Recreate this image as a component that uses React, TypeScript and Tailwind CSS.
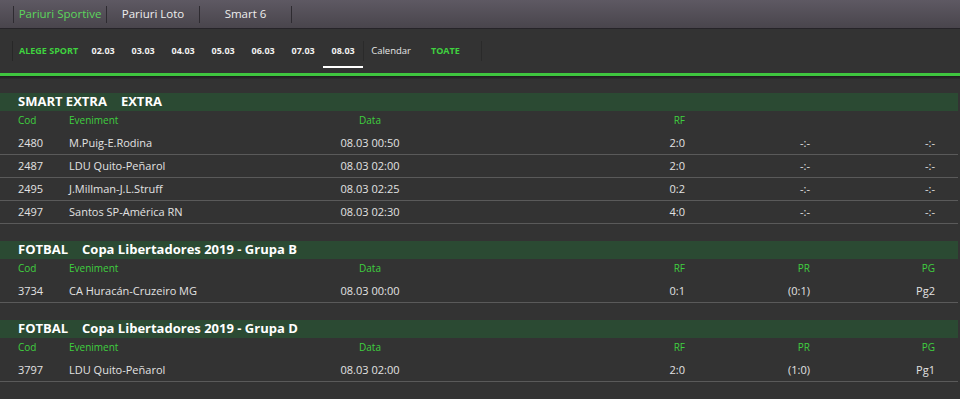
import React from "react";

type Row = { cod: string; ev: string; data: string; rf: string; pr: string; pg: string };
type Section = { sport: string; league: string; showPrPg: boolean; rows: Row[] };

const sections: Section[] = [
  {
    sport: "SMART EXTRA",
    league: "EXTRA",
    showPrPg: false,
    rows: [
      { cod: "2480", ev: "M.Puig-E.Rodina", data: "08.03 00:50", rf: "2:0", pr: "-:-", pg: "-:-" },
      { cod: "2487", ev: "LDU Quito-Peñarol", data: "08.03 02:00", rf: "2:0", pr: "-:-", pg: "-:-" },
      { cod: "2495", ev: "J.Millman-J.L.Struff", data: "08.03 02:25", rf: "0:2", pr: "-:-", pg: "-:-" },
      { cod: "2497", ev: "Santos SP-América RN", data: "08.03 02:30", rf: "4:0", pr: "-:-", pg: "-:-" },
    ],
  },
  {
    sport: "FOTBAL",
    league: "Copa Libertadores 2019 - Grupa B",
    showPrPg: true,
    rows: [{ cod: "3734", ev: "CA Huracán-Cruzeiro MG", data: "08.03 00:00", rf: "0:1", pr: "(0:1)", pg: "Pg2" }],
  },
  {
    sport: "FOTBAL",
    league: "Copa Libertadores 2019 - Grupa D",
    showPrPg: true,
    rows: [{ cod: "3797", ev: "LDU Quito-Peñarol", data: "08.03 02:00", rf: "2:0", pr: "(1:0)", pg: "Pg1" }],
  },
];

const dates = ["02.03", "03.03", "04.03", "05.03", "06.03", "07.03", "08.03"];

const gridCols = "grid grid-cols-[51px_261px_80px_275px_125px_125px] pl-[18px]";

export default function App() {
  return (
    <div className="w-[960px] h-[399px] overflow-hidden bg-[#333333] font-['Open_Sans','Liberation_Sans',sans-serif]">
      {/* top tabs */}
      <div className="h-[29px] bg-gradient-to-b from-[#5e5963] to-[#49454c] border-b border-[#262428] flex items-center pl-[13px]">
        {["Pariuri Sportive", "Pariuri Loto", "Smart 6"].map((t, i) => (
          <div
            key={t}
            className={
              "w-[93px] h-[17px] flex items-center justify-center border-l border-[#2e2b31] text-[11.5px] " +
              (i === 2 ? "border-r " : "") +
              (i === 0 ? "text-[#5cd65c]" : "text-[#eeeeee]")
            }
          >
            {t}
          </div>
        ))}
      </div>

      {/* date bar */}
      <div className="h-[44px] flex items-center pl-[12px] text-[9px]">
        <div className="h-[20px] flex items-center border-l border-[#272727] pl-[6px] pr-[5px] font-bold text-[#3fd23f]">
          ALEGE SPORT
        </div>
        {dates.map((d) => (
          <div key={d} className="relative h-full w-[40px] flex items-center justify-center font-bold text-[#f2f2f2]">
            {d}
            {d === "08.03" && <div className="absolute left-0 right-0 bottom-[5px] h-[2px] bg-white" />}
          </div>
        ))}
        <div className="h-[20px] flex items-center border-l border-[#2a2a2a] pl-[7px] pr-[7px] text-[9.5px] text-[#e6e6e6]">
          Calendar
        </div>
        <div className="h-[20px] flex items-center pl-[13px] pr-[21px] font-bold text-[#3fd23f]">TOATE</div>
        <div className="h-[20px] border-l border-[#2a2a2a]" />
      </div>

      <div className="h-[3px] bg-[#3fc63f]" />
      <div className="h-[3px] bg-gradient-to-b from-[#1e1e1e] to-[#2e2e2e]" />

      <div className="pt-[14px] flex flex-col gap-[17px]">
        {sections.map((s, si) => (
          <div key={si} className="mr-[2px]">
            <div className="h-[18px] bg-[#2b4a33] flex items-center pl-[18px] gap-[14px] text-[13px] font-bold text-white">
              <span>{s.sport}</span>
              <span>{s.league}</span>
            </div>
            <div className={gridCols + " h-[21px] pt-[2px] leading-[14px] text-[10px] text-[#3fcf3f]"}>
              <div>Cod</div>
              <div>Eveniment</div>
              <div className="text-center">Data</div>
              <div className="text-right">RF</div>
              <div className="text-right">{s.showPrPg ? "PR" : ""}</div>
              <div className="text-right">{s.showPrPg ? "PG" : ""}</div>
            </div>
            {s.rows.map((r) => (
              <div key={r.cod} className={gridCols + " h-[23px] items-center border-b border-[#5a5a5a] text-[11px] text-[#e2e2e2]"}>
                <div>{r.cod}</div>
                <div>{r.ev}</div>
                <div className="text-center">{r.data}</div>
                <div className="text-right">{r.rf}</div>
                <div className="text-right">{r.pr}</div>
                <div className="text-right">{r.pg}</div>
              </div>
            ))}
          </div>
        ))}
      </div>
    </div>
  );
}
